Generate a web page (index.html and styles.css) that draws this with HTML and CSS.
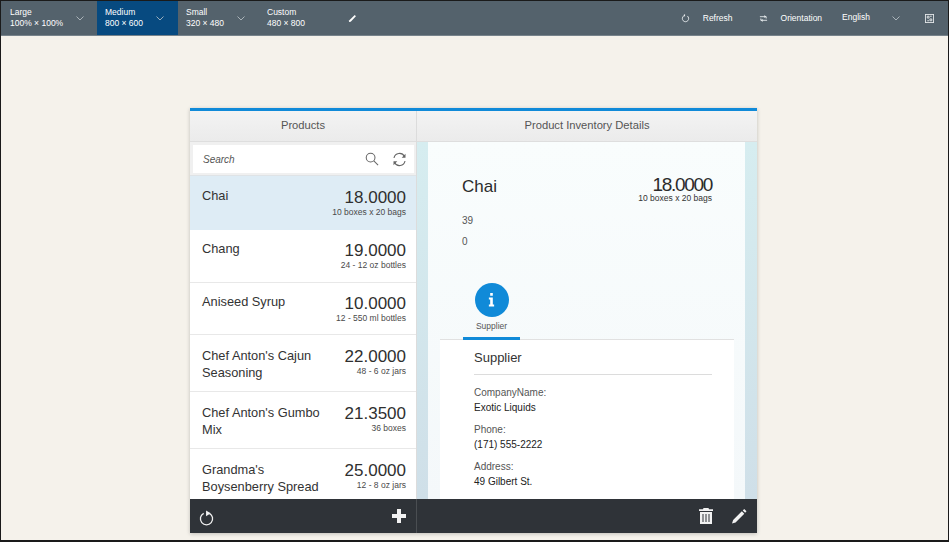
FILE: index.html
```html
<!DOCTYPE html>
<html lang="en">
<head>
<meta charset="utf-8">
<title>Product Inventory</title>
<link rel="stylesheet" href="styles.css">
</head>
<body>
<div class="frame">
  <header class="toolbar">
    <div class="size size-large"><span class="size-text">Large<br>100% × 100%</span><svg class="chev" viewBox="0 0 8 5"><path d="M.5.5 4 4 7.500.5"/></svg></div>
    <div class="size size-medium active"><span class="size-text">Medium<br>800 × 600</span><svg class="chev" viewBox="0 0 8 5"><path d="M.5.5 4 4 7.500.5"/></svg></div>
    <div class="size size-small"><span class="size-text">Small<br>320 × 480</span><svg class="chev" viewBox="0 0 8 5"><path d="M.5.5 4 4 7.500.5"/></svg></div>
    <div class="size size-custom"><span class="size-text">Custom<br>480 × 800</span></div>
    <svg class="tool-pencil" viewBox="0 0 10 10"><path d="M1 9 1.500 7 7.500 1.200 8.800 2.500 3 8.500Z"/></svg>
    <div class="tool-right">
      <svg class="tool-icon refresh-icon" viewBox="0 0 10 10"><path d="M3 2.200A3.500 3.500 0 1 0 7 2.200"/><path class="solid" d="M4.500 0v3l-2-1.500z"/></svg>
      <span class="tool-label refresh-label">Refresh</span>
      <svg class="tool-icon orient-icon" viewBox="0 0 10 10"><path d="M1 3h7v2M9 7H2V5"/><path class="solid" d="M6 1.200 8 3 6 4.500zM4 5.500 2 7l2 1.800z"/></svg>
      <span class="tool-label orient-label">Orientation</span>
      <span class="tool-label lang-label">English</span>
      <svg class="chev lang-chev" viewBox="0 0 8 5"><path d="M.5.5 4 4 7.500.5"/></svg>
      <svg class="full-icon" viewBox="0 0 10 10"><rect x=".5" y=".5" width="9" height="9"/><path d="M2.500 2.500h2v2h-2zM5.500 5.500h2v2h-2zM5.500 2.500h2M2.500 7.500h2"/></svg>
    </div>
  </header>

  <main class="stage">
    <section class="app">
      <aside class="master">
        <h2 class="bar-title">Products</h2>
        <div class="search-area">
          <div class="search">
            <span class="search-text">Search</span>
            <svg class="search-icon" viewBox="0 0 15 15"><circle cx="6" cy="6" r="4.700"/><path d="M9.500 9.500 14 14"/></svg>
            <svg class="sync-icon" viewBox="0 0 15 15"><path d="M2 6A5.600 5.600 0 0 1 12.500 4.500M13 9A5.600 5.600 0 0 1 2.500 10.500"/><path class="solid" d="M13.500 1.800v4h-3.800zM1.500 13.200v-4h3.800z"/></svg>
          </div>
        </div>
        <ul class="list">
          <li class="item selected"><div class="name">Chai</div><div class="num"><div class="price">18.0000</div><div class="unit">10 boxes x 20 bags</div></div></li>
          <li class="item"><div class="name">Chang</div><div class="num"><div class="price">19.0000</div><div class="unit">24 - 12 oz bottles</div></div></li>
          <li class="item"><div class="name">Aniseed Syrup</div><div class="num"><div class="price">10.0000</div><div class="unit">12 - 550 ml bottles</div></div></li>
          <li class="item tall"><div class="name">Chef Anton's Cajun Seasoning</div><div class="num"><div class="price">22.0000</div><div class="unit">48 - 6 oz jars</div></div></li>
          <li class="item tall"><div class="name">Chef Anton's Gumbo Mix</div><div class="num"><div class="price">21.3500</div><div class="unit">36 boxes</div></div></li>
          <li class="item tall"><div class="name">Grandma's Boysenberry Spread</div><div class="num"><div class="price">25.0000</div><div class="unit">12 - 8 oz jars</div></div></li>
        </ul>
        <footer class="foot foot-left">
          <svg class="foot-icon reload" viewBox="0 0 16 16"><path class="thick" d="M5 3A6.500 6.500 0 1 0 11 3"/><path class="solid" d="M7.500 0 12.500 3 7.500 6z"/></svg>
          <svg class="foot-icon plus" viewBox="0 0 16 16"><path class="solid" d="M6 1h4v5h5v4h-5v5H6v-5H1V6h5z"/></svg>
        </footer>
      </aside>

      <article class="detail">
        <h2 class="bar-title">Product Inventory Details</h2>
        <div class="detail-body">
          <div class="sheet">
            <div class="obj-head">
              <div class="obj-row">
                <div class="obj-name">Chai</div>
                <div class="obj-num"><div class="obj-price">18.0000</div><div class="obj-unit">10 boxes x 20 bags</div></div>
              </div>
              <div class="attr attr-first">39</div>
              <div class="attr">0</div>
            </div>
            <div class="tab-strip">
              <div class="tab">
                <div class="tab-circle"><svg class="info" viewBox="0 0 8 16"><path d="M2.500 0h3v3h-3zM1 5h4.500v8H7v2.500H1V13h1.500V7.500H1z"/></svg></div>
                <div class="tab-label">Supplier</div>
              </div>
            </div>
            <div class="tab-content">
              <h3 class="form-title">Supplier</h3>
              <div class="field"><div class="field-label">CompanyName:</div><div class="field-value">Exotic Liquids</div></div>
              <div class="field"><div class="field-label">Phone:</div><div class="field-value">(171) 555-2222</div></div>
              <div class="field"><div class="field-label">Address:</div><div class="field-value">49 Gilbert St.</div></div>
            </div>
          </div>
        </div>
        <footer class="foot foot-right">
          <svg class="foot-icon trash" viewBox="0 0 14 16"><path class="solid" fill-rule="evenodd" d="M4.500 0h5L10 1.200h4V3H0V1.200h4zM1 4h12v12H1zM3.500 6v8h1V6zM6.500 6v8h1V6zM9.500 6v8h1V6z"/></svg>
          <svg class="foot-icon pen" viewBox="0 0 16 16"><path class="solid" d="M0 16l1.200-3.800L10.500 3l2.600 2.600L3.800 14.800zM11.500 2l1.500-1.500 2.500 2.500L14 4.500z"/></svg>
        </footer>
      </article>
    </section>
  </main>
</div>
</body>
</html>
```

FILE: styles.css
```css
* { box-sizing: border-box; }
html, body { margin: 0; padding: 0; background: #f5f2eb; }
body { width: 949px; height: 542px; overflow: hidden; font-family: "Liberation Sans", Arial, sans-serif; color: #2b2b2b; }
ul { list-style: none; margin: 0; padding: 0; }
h2, h3 { margin: 0; font-weight: 400; }

.frame {
  width: 949px; height: 542px;
  border: solid #1a1a1a; border-width: 1.500px 1.500px 2px 1.500px;
  display: flex; flex-direction: column; overflow: hidden;
}

/* top toolbar */
.toolbar {
  flex: none; height: 35px; background: #54626c; color: #fff;
  display: flex; align-items: stretch; font-size: 8.500px; border-bottom: 1px solid #77838b;
}
.size { display: flex; align-items: center; justify-content: space-between; padding-left: 8px; }
.size-text { line-height: 11.500px; }
.size-large { width: 96px; padding-left: 9px; padding-right: 13px; }
.size-medium { width: 81px; padding-right: 14px; }
.size-small { width: 81px; padding-right: 14px; }
.size-custom { width: 81px; }
.active { background: #074a80; }
.chev { width: 8px; height: 5px; fill: none; stroke: #c0c8cd; stroke-width: .8; }
.tool-pencil { width: 9px; height: 9px; align-self: center; margin-left: 8px; fill: #fff; }
.tool-right { margin-left: auto; display: flex; align-items: center; }
.tool-icon { width: 9px; height: 9px; fill: none; stroke: #e8ecee; stroke-width: 1; }
.tool-icon .solid, .solid { fill: #e8ecee; stroke: none; }
.refresh-label { margin-left: 13px; }
.orient-icon { margin-left: 26px; }
.orient-label { margin-left: 13px; }
.lang-label { margin-left: 20px; position: relative; top: -1px; }
.lang-chev { margin-left: 22px; }
.full-icon { width: 9px; height: 9px; margin: 0 14px 0 25px; fill: none; stroke: #e3e6e8; stroke-width: 1; }

/* stage */
.stage { flex: 1; min-height: 0; padding: 72px 191px 7px 189px; }
.app {
  height: 425px; display: flex; border-top: 3px solid #108ad8;
  box-shadow: 0 1px 4px rgba(0, 0, 0, .22);
}
.master { width: 227px; flex: none; display: flex; flex-direction: column; background: #fff; border-right: 1px solid #dcdcdc; }
.detail { flex: 1; min-width: 0; display: flex; flex-direction: column; }
.bar-title {
  flex: none; height: 31px; line-height: 29px; text-align: center; font-size: 11.200px; color: #555;
  background: linear-gradient(#f3f3f3, #ebebeb); border-bottom: 1px solid #dedede;
}
.search-area { flex: none; height: 34px; padding: 3px 2px 2px 3px; background: #f0f0f0; border-bottom: 1px solid #dfe3e6; }
.search { height: 28px; background: #fff; display: flex; align-items: center; padding: 0 7px 0 10px; }
.search-text { flex: 1; font-size: 10px; font-style: italic; color: #555; }
.search-icon { width: 14px; height: 14px; fill: none; stroke: #666; stroke-width: 1.100; margin-right: 13px; }
.sync-icon { width: 15px; height: 15px; fill: none; stroke: #666; stroke-width: 1.100; }
.sync-icon .solid { fill: #666; }

.list { flex: 1; min-height: 0; overflow: hidden; }
.item { height: 52.500px; padding: 11px 10px 0 12px; display: flex; justify-content: space-between; border-bottom: 1px solid #e8e8e8; background: #fff; }
.item.tall { height: 57px; padding-top: 12px; }
.item.selected { height: 54px; padding-top: 12px; background: #deecf5; border-bottom: 0; }
.name { font-size: 12.800px; line-height: 17px; color: #333; max-width: 125px; margin-top: -1px; }
.item.tall .name { margin-top: 0; }
.num { text-align: right; flex: none; }
.price { font-size: 17px; line-height: 19px; color: #2f2f2f; }
.unit { font-size: 8.500px; line-height: 11px; color: #4a4a4a; }

.foot { flex: none; height: 34px; background: #2f3338; display: flex; align-items: center; justify-content: space-between; padding: 0 9px; }
.foot-left { margin-right: -1px; border-right: 1px solid #4a4e52; }
.foot-icon { width: 15px; height: 16px; fill: none; }
.reload { margin-top: 3px; }
.thick { stroke: #f0f0f0; stroke-width: 1.400; fill: none; }
.foot .solid { fill: #f2f2f2; }
.foot-icon.plus { width: 16px; height: 16px; }
.foot-icon.trash { width: 14px; height: 16px; }
.foot-right { justify-content: flex-end; padding-right: 10px; gap: 19px; }

/* detail */
.detail-body { flex: 1; min-height: 0; padding: 0 12px 0 11px; background: linear-gradient(180deg, #d6edf0 0%, #cfdfe8 100%); overflow: hidden; }
.sheet { height: 100%; background: linear-gradient(180deg, #f9fdfd 0%, #f4f8fa 100%); display: flex; flex-direction: column; }
.obj-head { flex: none; padding: 35px 33px 0 34px; }
.obj-row { display: flex; justify-content: space-between; }
.obj-name { font-size: 17px; line-height: 20px; color: #2b2b2b; }
.obj-price { font-size: 19px; line-height: 16px; letter-spacing: -1.300px; text-align: right; color: #2b2b2b; }
.obj-unit { font-size: 8.500px; line-height: 9px; text-align: right; color: #333; margin-top: 1px; }
.attr { font-size: 10px; line-height: 12px; color: #555; margin-top: 9px; }
.attr-first { margin-top: 12px; }
.tab-strip { flex: none; margin: 0 11px 0 12px; height: 92px; padding: 35px 0 0 23px; border-bottom: 1px solid #e1e1e1; }
.tab { width: 57px; height: 57px; border-bottom: 3px solid #108ad8; display: flex; flex-direction: column; align-items: center; }
.tab-circle { width: 34px; height: 34px; flex: none; border-radius: 50%; background: #108ad8; display: flex; align-items: center; justify-content: center; }
.info { width: 7px; height: 14px; fill: #fff; }
.tab-label { font-size: 8.500px; line-height: 11px; color: #555; margin-top: 4px; }
.tab-content { flex: 1; min-height: 0; margin: 0 11px 0 12px; background: #fff; padding: 0 22px 0 34px; overflow: hidden; }
.form-title { font-size: 13px; line-height: 17px; color: #333; padding: 9px 0 8px; border-bottom: 1px solid #dcdcdc; margin-bottom: 11px; }
.field { margin-bottom: 8px; }
.field-label { font-size: 10px; line-height: 14px; color: #555; }
.field-value { font-size: 10px; line-height: 14px; color: #222; margin-top: 1px; }
```
